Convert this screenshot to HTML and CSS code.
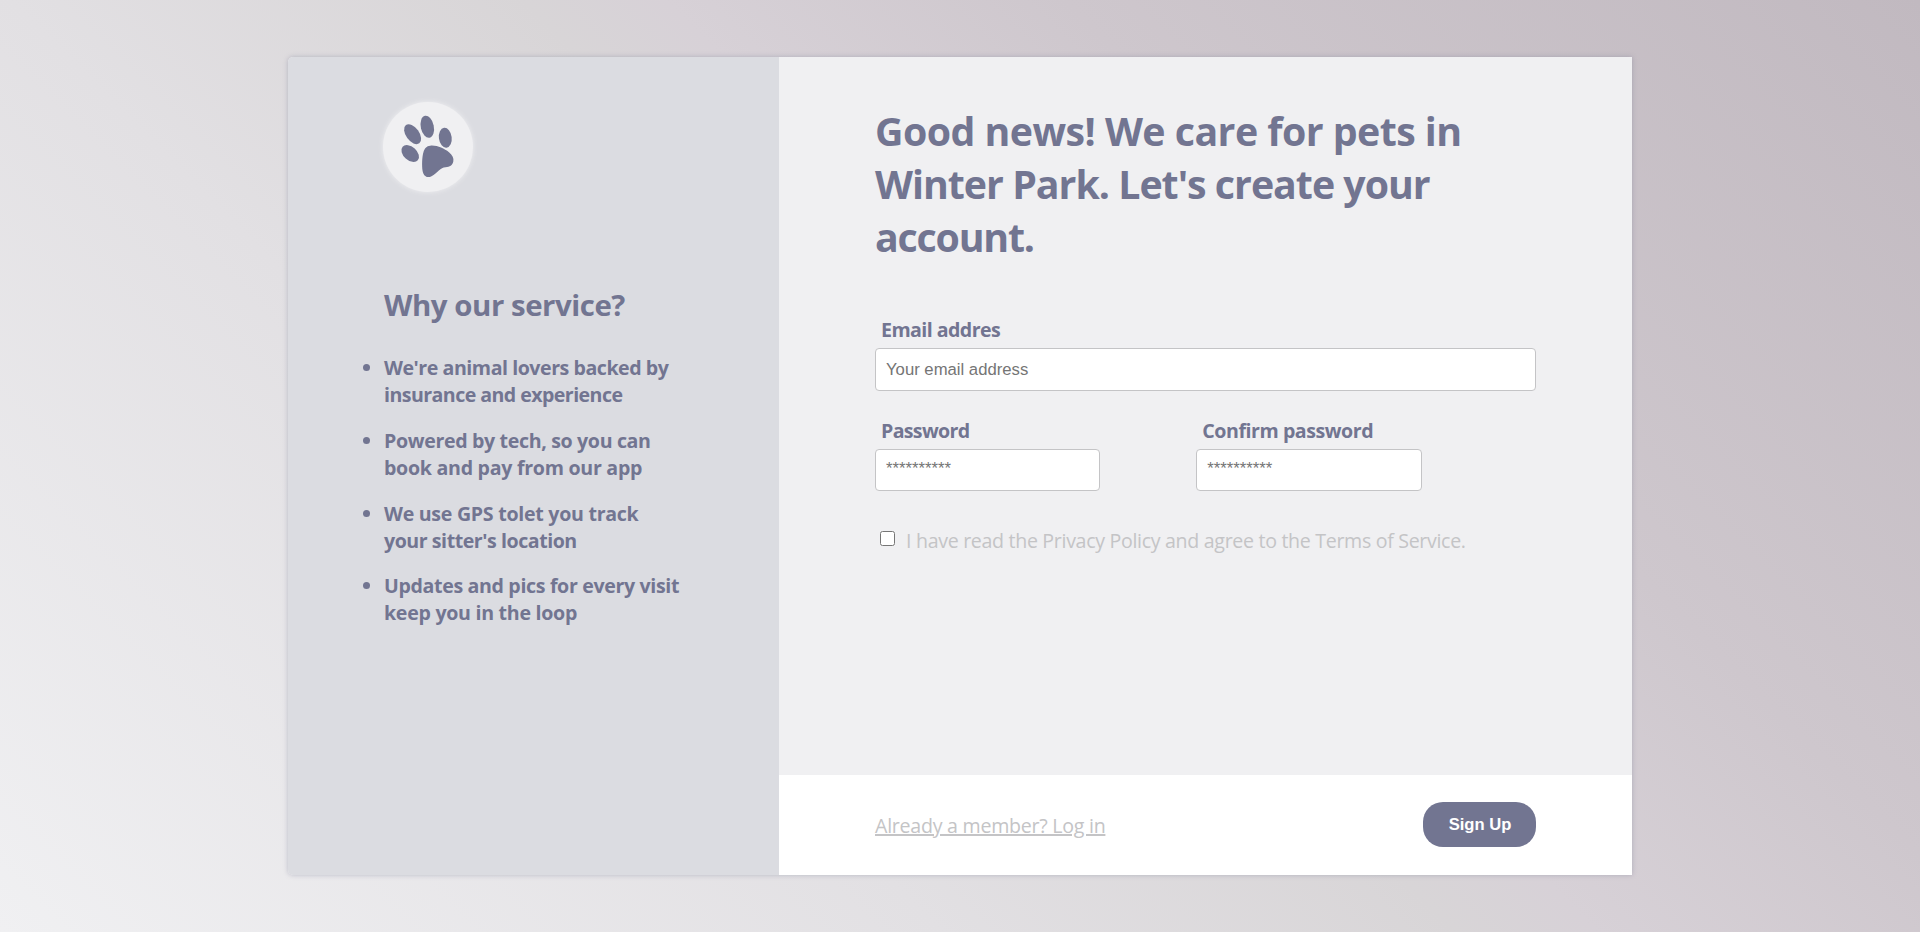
FILE: index.html
```html
<!DOCTYPE html>
<html lang="en">
<head>
<meta charset="utf-8">
<title>Create your account</title>
<link rel="stylesheet" href="styles.css">
</head>
<body>
<main class="card">
  <aside class="side">
    <div class="logo">
      <svg class="paw" viewBox="0 0 90 90" aria-hidden="true">
        <ellipse cx="44.3" cy="24.8" rx="6.5" ry="11.2" transform="rotate(-12 44.3 24.8)"/>
        <ellipse cx="29.6" cy="32.2" rx="6.6" ry="11.3" transform="rotate(-36 29.6 32.2)"/>
        <ellipse cx="62.3" cy="35.8" rx="6.4" ry="10" transform="rotate(-7 62.3 35.8)"/>
        <ellipse cx="27.2" cy="51.5" rx="6.7" ry="10.2" transform="rotate(-48 27.2 51.5)"/>
        <path d="M47.2 43.7C54 43 61 46.500 66 50.200C69.500 53 71 56 70.300 59.500C69.300 63.500 67 65 62.500 65.200C57.500 65.300 54.500 71 48.500 74.200C44 76.500 40.500 74 39.600 69C38.800 63 39 55 40.500 50C41.500 46.500 43.500 44 47.200 43.700Z"/>
      </svg>
    </div>
    <h2 class="side-title">Why our service?</h2>
    <ul class="benefits">
      <li><span class="tight-3">We're animal lovers backed by</span><br><span class="tight-4">insurance and experience</span></li>
      <li><span class="tight-2">Powered by tech, so you can</span><br><span class="tight-1">book and pay from our app</span></li>
      <li><span class="tight-1">We use GPS tolet you track</span><br><span class="tight-3">your sitter's location</span></li>
      <li><span class="tight-2">Updates and pics for every visit</span><br><span class="tight-1">keep you in the loop</span></li>
    </ul>
  </aside>
  <form class="signup">
    <div class="fields">
      <h1 class="title"><span class="title-lead">Good news! We care for pets in</span><br><span class="title-mid">Winter Park. Let's create your</span><br><span class="title-end">account.</span></h1>
      <div class="field email">
        <label class="tight-4" for="email">Email addres</label>
        <input id="email" type="email" placeholder="Your email address">
      </div>
      <div class="passwords">
        <div class="field">
          <label class="tight-5" for="password">Password</label>
          <input id="password" type="password" placeholder="**********">
        </div>
        <div class="field">
          <label class="tight-3" for="confirm">Confirm password</label>
          <input id="confirm" type="password" placeholder="**********">
        </div>
      </div>
      <div class="agree">
        <input id="agree" class="check" type="checkbox">
        <label for="agree">I have read the Privacy Policy and agree to the Terms of Service.</label>
      </div>
    </div>
    <footer class="actions">
      <a class="login" href="#">Already a member? Log in</a>
      <button class="submit" type="button">Sign Up</button>
    </footer>
  </form>
</main>
</body>
</html>
```
FILE: styles.css
```css
* {
  box-sizing: border-box;
}

body {
  margin: 0;
  min-height: 932px;
  display: flex;
  align-items: flex-start;
  justify-content: center;
  padding-top: 57px;
  font-family: "Segoe UI", "Open Sans", sans-serif;
  font-size: 19.6px;
  color: #727591;
  background: linear-gradient(45deg, #f0f0f2, #e2e0e3 33%, #d8d5d7 51%, #d7d1d7 56%, #cec7cd 70%, #c1b9c0);
}

.card {
  display: flex;
  width: 1344px;
  height: 818px;
  border-radius: 5px 0 0 5px;
  background: #f0f0f2;
  box-shadow: 0 0 5px rgba(114, 117, 145, 0.4);
}

.side {
  width: 491px;
  padding: 45px 96px 0;
  border-radius: 5px 0 0 5px;
  background: #dbdce1;
}

.logo {
  width: 90px;
  height: 90px;
  margin-left: -0.7px;
  border-radius: 50%;
  background: #f0f0f2;
  box-shadow: 0 0 5px #f0f0f2;
}

.paw {
  display: block;
  width: 90px;
  height: 90px;
  fill: #727591;
}

.side-title {
  margin: 93px 0 0;
  font-size: 29.4px;
  line-height: 40px;
  letter-spacing: -0.45px;
  white-space: nowrap;
}

.benefits {
  margin: 29.4px 0 0;
  padding: 0;
  font-weight: 700;
  line-height: 27px;
  white-space: nowrap;
}

.benefits li {
  margin-bottom: 18.6px;
}

.tight-1 {
  letter-spacing: -0.28px;
}

.tight-2 {
  letter-spacing: -0.35px;
}

.tight-3 {
  letter-spacing: -0.46px;
}

.tight-4 {
  letter-spacing: -0.56px;
}

.tight-5 {
  letter-spacing: -0.67px;
}

.signup {
  flex: 1;
  display: flex;
  flex-direction: column;
}

.fields {
  flex: 1;
  padding: 48px 96px 0;
}

.title {
  margin: 0;
  font-size: 39.3px;
  line-height: 53.2px;
  white-space: nowrap;
}

.title-lead {
  letter-spacing: -0.54px;
}

.title-mid {
  letter-spacing: -1px;
}

.title-end {
  letter-spacing: -1.2px;
}

.field {
  display: flex;
  flex-direction: column;
}

.field label {
  padding-left: 6px;
  font-weight: 700;
  line-height: 27px;
}

.field input {
  height: 42px;
  margin-top: 5px;
  padding: 0 10px;
  border: 1px solid #c4c4c6;
  border-radius: 4px;
  background: #fff;
  font-family: Arial, "Liberation Sans", sans-serif;
  font-size: 16.7px;
}

.email {
  margin-top: 51.4px;
}

.field.email input {
  height: 43px;
}

.passwords {
  display: grid;
  grid-template-columns: 225px 226px;
  gap: 96.3px;
  margin-top: 26px;
}

.passwords input {
  padding-bottom: 3px;
}

.agree {
  display: flex;
  margin-top: 36px;
  gap: 11px;
  padding-left: 5px;
  line-height: 27px;
  letter-spacing: -0.317px;
  color: #c4c4c6;
  white-space: nowrap;
}

.check {
  width: 15px;
  height: 15px;
  margin: 4px 0 0;
}

.actions {
  display: flex;
  align-items: flex-start;
  justify-content: space-between;
  height: 100px;
  padding: 27px 96px 0;
  background: #fff;
}

.login {
  margin-top: 10px;
  line-height: 27px;
  letter-spacing: -0.26px;
  color: #c4c4c6;
  text-decoration-thickness: 2px;
  text-underline-offset: 1px;
}

.submit {
  width: 113px;
  height: 45px;
  padding: 0 0 0 1px;
  border: 0;
  border-radius: 20px;
  background: #727591;
  color: #fff;
  font-family: Arial, "Liberation Sans", sans-serif;
  font-size: 16.6px;
  font-weight: 700;
}
```
